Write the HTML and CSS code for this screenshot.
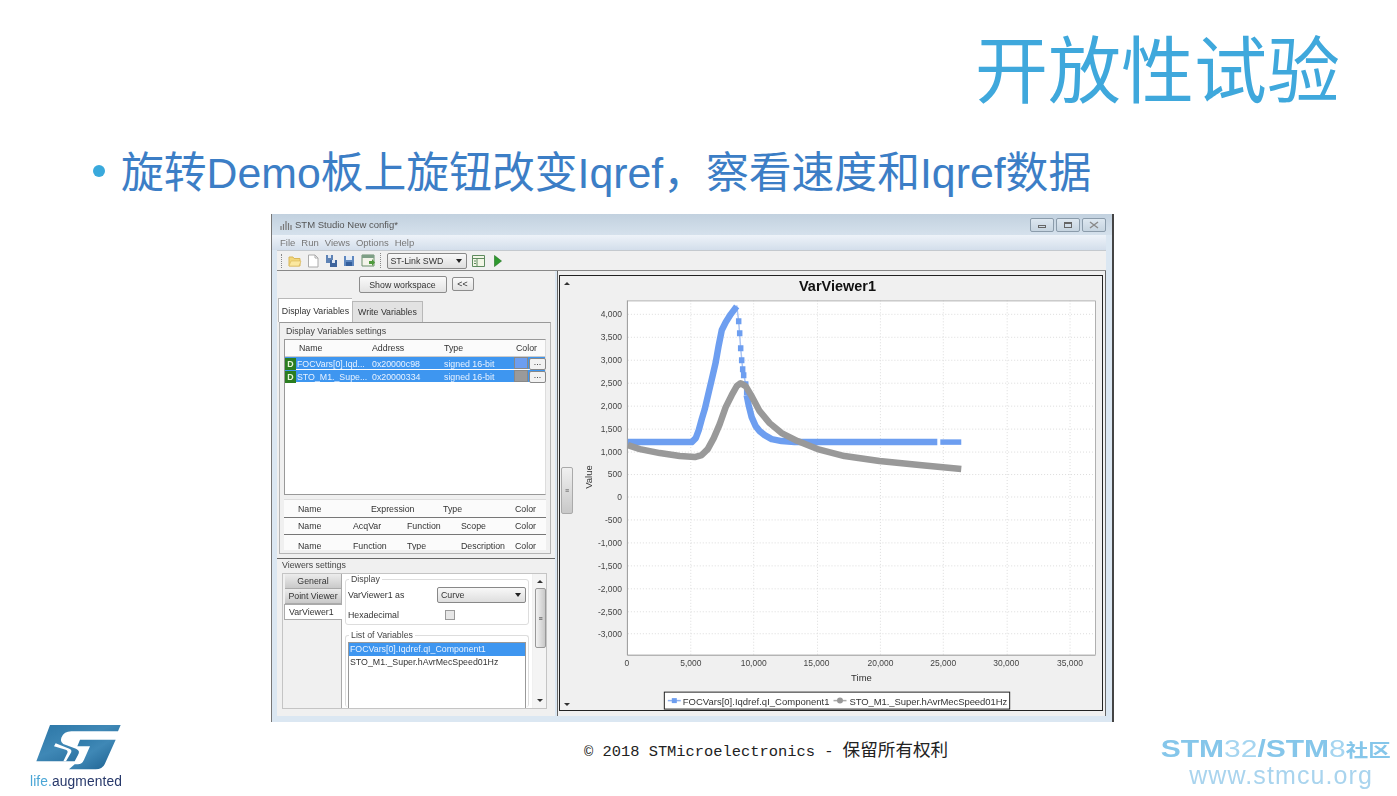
FILE: index.html
```html
<!DOCTYPE html>
<html lang="zh-CN">
<head>
<meta charset="utf-8"/>
<title>开放性试验</title>
<link rel="stylesheet" href="styles.css">
</head>
<body>
<div class="slide">
  <h1 class="slide-title">开放性试验</h1>
  <div class="bullet-line"><span class="bullet"></span><span>旋转Demo板上旋钮改变Iqref，察看速度和Iqref数据</span></div>

  <div class="window">
    <div class="titlebar">
      <svg class="app-icon" width="12" height="10" viewBox="0 0 12 10"><path d="M1 6v4M3.5 4v6M6 1v9M8.500 3v7M11 5v5" stroke="#777" stroke-width="1.2"/></svg>
      <span class="win-title">STM Studio New config*</span>
      <div class="win-btns">
        <span class="win-btn"><i class="ico-min"></i></span>
        <span class="win-btn"><i class="ico-max"></i></span>
        <span class="win-btn win-close">
          <svg width="10" height="8" viewBox="0 0 10 8"><path d="M1 1l8 6M9 1L1 7" stroke="#8a8a8a" stroke-width="1.4"/></svg>
        </span>
      </div>
    </div>
    <div class="menubar"><span>File</span><span>Run</span><span>Views</span><span>Options</span><span>Help</span></div>
    <div class="toolbar">
      <span class="grip"></span>
      <svg width="14" height="13" viewBox="0 0 14 13"><path d="M1 3h4l1 1.500h6V12H1z" fill="#f3d77a" stroke="#d9b75a"/><path d="M1 12l2-5h10l-2 5z" fill="#fbe8a0" stroke="#d9b75a" stroke-width=".6"/></svg>
      <svg width="12" height="14" viewBox="0 0 12 14"><path d="M1.500 1H8l3 3v9H1.500z" fill="#fff" stroke="#aaa"/><path d="M8 1v3h3" fill="none" stroke="#aaa"/></svg>
      <svg width="13" height="14" viewBox="0 0 13 14"><path d="M1 1h7v8H1z" fill="#5f83b5"/><path d="M3 1h3v3H3z" fill="#dde6f2"/><path d="M5 6h7v7H5z" fill="#3f659c"/><path d="M7 6h3v3H7z" fill="#dde6f2"/></svg>
      <svg width="12" height="12" viewBox="0 0 12 12"><path d="M1 1h10v10H1z" fill="#5f88c0"/><path d="M3 1h6v4H3z" fill="#e4ecf6"/><path d="M3 7h6v4H3z" fill="#345f9c"/></svg>
      <svg width="15" height="14" viewBox="0 0 15 14"><path d="M1 1h12v11H1z" fill="#f4f4ea" stroke="#6d8f6d"/><path d="M1 1h12v3H1z" fill="#7e9f86"/><path d="M8 7h3V5l3 3.500-3 3.500v-2H8z" fill="#4f9a3d"/></svg>
      <span class="divider"></span>
      <div class="combo combo-link"><span>ST-Link SWD</span><i class="caret"></i></div>
      <svg width="13" height="12" viewBox="0 0 13 12"><path d="M.5.500h12v11H.5z" fill="#f2f6e6" stroke="#5e8a5e"/><path d="M.5 3.500h12M5 3.500v8M2 6h2M2 8.500h2" stroke="#5e8a5e"/></svg>
      <svg class="play-icon" width="8" height="12" viewBox="0 0 8 12"><path d="M.5.500l7 5.500-7 5.500z" fill="#2f9a2f" stroke="#1d6f1d" stroke-width=".6"/></svg>
    </div>

    <div class="content">
      <div class="left-panel">
        <div class="ws-row">
          <button class="btn btn-ws">Show workspace</button>
          <button class="btn btn-back">&lt;&lt;</button>
        </div>
        <div class="tabs">
          <span class="tab tab-on">Display Variables</span>
          <span class="tab">Write Variables</span>
        </div>
        <div class="var-group">
          <div class="group-label">Display Variables settings</div>
          <div class="var-table">
            <div class="tr th cols-a"><span></span><span>Name</span><span>Address</span><span>Type</span><span>Color</span></div>
            <div class="tr row-sel cols-a">
              <span class="badge">D</span><span class="cell-t">FOCVars[0].Iqd...</span><span>0x20000c98</span><span>signed 16-bit</span>
              <span class="color-cell"><i class="swatch sw-blue"></i><i class="dots">...</i></span>
            </div>
            <div class="tr row-sel cols-a">
              <span class="badge">D</span><span class="cell-t">STO_M1._Supe...</span><span>0x20000334</span><span>signed 16-bit</span>
              <span class="color-cell"><i class="swatch sw-gray"></i><i class="dots">...</i></span>
            </div>
          </div>
          <div class="mini mini-a cols-a"><span></span><span>Name</span><span>Expression</span><span>Type</span><span>Color</span></div>
          <div class="mini mini-b cols-b"><span></span><span>Name</span><span>AcqVar</span><span>Function</span><span>Scope</span><span>Color</span></div>
          <div class="mini mini-c cols-b"><span></span><span>Name</span><span>Function</span><span>Type</span><span>Description</span><span>Color</span></div>
        </div>
        <div class="viewers">
          <div class="group-label viewers-label">Viewers settings</div>
          <div class="viewers-box">
            <div class="side-tabs">
              <span class="side-tab">General</span>
              <span class="side-tab">Point Viewer</span>
              <span class="side-tab side-on">VarViewer1</span>
            </div>
            <div class="viewer-form">
              <fieldset class="display-set">
                <legend>Display</legend>
                <div class="form-row"><span>VarViewer1 as</span><div class="combo combo-curve"><span>Curve</span><i class="caret"></i></div></div>
                <div class="form-row hex-row"><span>Hexadecimal</span><i class="check"></i></div>
              </fieldset>
              <fieldset class="list-set">
                <legend>List of Variables</legend>
                <div class="var-list">
                  <div class="list-sel">FOCVars[0].Iqdref.qI_Component1</div>
                  <div class="list-item">STO_M1._Super.hAvrMecSpeed01Hz</div>
                </div>
              </fieldset>
            </div>
            <div class="vscroll"><i class="arr-up"></i><span class="vthumb">≡</span><i class="arr-down"></i></div>
          </div>
        </div>
      </div>

      <div class="chart-panel">
        <div class="chart-box">
          <div class="chart-strip"><i class="arr-up"></i><span class="strip-handle">≡</span><i class="arr-down"></i></div>
          <svg class="chart" width="530" height="434" viewBox="573 276 530 434">
            <rect x="628" y="300" width="468" height="355" fill="#fff"/>
            <path class="grid" d="M691 300V655M754 300V655M818 300V655M881 300V655M944 300V655M1008 300V655M1071 300V655"/>
            <path class="grid" d="M628 314H1096M628 337H1096M628 360H1096M628 383H1096M628 406H1096M628 429H1096M628 452H1096M628 474.500H1096M628 497H1096M628 520H1096M628 543H1096M628 566H1096M628 589H1096M628 612H1096M628 634H1096"/>
            <path d="M628 300.500H1096.500V655" fill="none" stroke="#b0b0b0"/>
            <path d="M627.500 300V655.500H1096.500" fill="none" stroke="#999"/>
            <text class="chart-title" x="838" y="291" text-anchor="middle">VarViewer1</text>
            <g class="y-ticks" text-anchor="end">
              <text x="622" y="317">4,000</text><text x="622" y="340">3,500</text><text x="622" y="363">3,000</text>
              <text x="622" y="386">2,500</text><text x="622" y="409">2,000</text><text x="622" y="432">1,500</text>
              <text x="622" y="455">1,000</text><text x="622" y="477">500</text><text x="622" y="500">0</text>
              <text x="622" y="523">-500</text><text x="622" y="546">-1,000</text><text x="622" y="569">-1,500</text>
              <text x="622" y="592">-2,000</text><text x="622" y="615">-2,500</text><text x="622" y="637">-3,000</text>
            </g>
            <g class="y-ticks" text-anchor="middle">
              <text x="627" y="666">0</text><text x="691" y="666">5,000</text><text x="754" y="666">10,000</text>
              <text x="817" y="666">15,000</text><text x="881" y="666">20,000</text><text x="944" y="666">25,000</text>
              <text x="1007" y="666">30,000</text><text x="1071" y="666">35,000</text>
            </g>
            <text class="axis-name" x="862" y="681" text-anchor="middle">Time</text>
            <text class="axis-name" transform="translate(592 477) rotate(-90)" text-anchor="middle">Value</text>
            <polyline class="line-thin" points="737,305 739,321 741,348 743,369 746,384"/>
            <polyline class="line-blue" points="628,442 692,442 696,438 699,430 702,419 705,409 709,392 713,375 716,362 719,345 722,330 726,322 731,314 737,306"/>
            <path class="dots-blue" d="M739 318v6M740 330v6M741 345v6M742 357v6M743 366v6M744 372v6M746 381v6M747 389v6"/>
            <polyline class="line-blue" points="747,395 749,405 752,417 756,426 760,431 765,435 772,439 782,441 795,442 938,442"/>
            <path class="dots-blue" d="M941 442h21" stroke-width="6"/>
            <polyline class="line-gray" points="628,445 640,449 660,453 680,456 695,457 702,455 708,449 714,438 720,424 726,407 732,395 737,386 741,383 746,386 752,396 760,411 770,423 782,433 798,441 818,449 845,456 880,461 920,465 962,469"/>
            <rect class="legend-box" x="664.500" y="692.500" width="346" height="17"/>
            <path d="M668 701h13" stroke="#8fb0ee" stroke-width="1.500"/><rect x="672" y="698.500" width="5" height="5" fill="#6d9ef0"/>
            <text class="legend-text" x="683" y="705" textLength="147">FOCVars[0].Iqdref.qI_Component1</text>
            <path d="M834 701h13" stroke="#aaa" stroke-width="1.500"/><circle cx="840.500" cy="701" r="3" fill="#999"/>
            <text class="legend-text" x="850" y="705" textLength="158">STO_M1._Super.hAvrMecSpeed01Hz</text>
          </svg>
        </div>
      </div>
    </div>
  </div>

  <div class="footer">
    <div class="brand">
      <svg width="94" height="48" viewBox="94 22 282 144">
        <defs>
          <linearGradient id="stBlue" x1="0" y1="0" x2="1" y2="1">
            <stop offset="0" stop-color="#2b76a6"/>
            <stop offset=".45" stop-color="#3f88b6"/>
            <stop offset="1" stop-color="#1c5f8f"/>
          </linearGradient>
        </defs>
        <path fill="url(#stBlue)" d="M148 28H360L352 47H212Q190 47 182 66Q176 82 196 88L226 99Q240 105 232 118L222 137H107Z"/>
        <path fill="#fff" d="M165 83L206 99Q216 103 210 113L196 137H188L200 112Q203 105 195 102L160 92Z"/>
        <path fill="url(#stBlue)" d="M238 72H345L312 146Q305 161 285 161H205L222 146H232Q244 146 250 132L268 92H230Z"/>
      </svg>
      <div class="tagline"><span class="life">life.</span>augmented</div>
    </div>
    <div class="copyright">© 2018 STMicroelectronics - <span class="copyright-cn">保留所有权利</span></div>
    <div class="community">
      <div class="community-name"><b>STM</b>32<b>/STM</b>8<b class="cn">社区</b></div>
      <div class="community-url">www.stmcu.org</div>
    </div>
  </div>
</div>
</body>
</html>
```

FILE: styles.css
```css
html, body { margin: 0; padding: 0; background: #fff; }
body { font-family: "Liberation Sans", "Noto Sans CJK SC", sans-serif; overflow: hidden; }
i { font-style: normal; display: block; }

.slide { width: 1397px; height: 796px; display: flex; flex-direction: column; }

.slide-title {
  height: 140px;
  margin: 0;
  padding: 28px 57px 0 0;
  box-sizing: border-box;
  text-align: right;
  font-size: 73px;
  line-height: 88px;
  font-weight: 400;
  color: #3fa8dc;
}
.bullet-line {
  height: 74px;
  padding-left: 93px;
  display: flex;
  align-items: flex-start;
  font-size: 42.800px;
  line-height: 66px;
  color: #3c7ec6;
}
.bullet { width: 12px; height: 12px; margin: 25px 16px 0 0; border-radius: 50%; background: #39a9dc; flex: none; }

/* app window */
.window {
  width: 843px;
  height: 508px;
  margin-left: 271px;
  box-sizing: border-box;
  display: flex;
  flex-direction: column;
  background: #dbe7f2;
  border-left: 1px solid #777;
  border-right: 2px solid #444;
  font-size: 8.800px;
  color: #333;
  filter: blur(.35px);
}
.titlebar {
  height: 21px;
  flex: none;
  display: flex;
  align-items: center;
  padding-left: 8px;
  background: linear-gradient(#c2d1df, #d5e1ec);
  font-size: 9.500px;
  color: #555;
}
.app-icon { margin-right: 3px; }
.win-btns { margin-left: auto; margin-right: 6px; display: flex; gap: 2px; }
.win-btn {
  width: 24px;
  height: 14px;
  box-sizing: border-box;
  border: 1px solid #8b9cab;
  border-radius: 2px;
  background: linear-gradient(#dde7f0, #c6d4e0);
  display: flex;
  align-items: center;
  justify-content: center;
}
.ico-min { width: 8px; height: 3px; border: 1px solid #666; box-sizing: border-box; margin-top: 3px; }
.ico-max { width: 8px; height: 6px; border: 1px solid #666; box-sizing: border-box; border-top-width: 2px; }
.menubar {
  height: 15px;
  flex: none;
  display: flex;
  gap: 6px;
  align-items: center;
  padding-left: 8px;
  margin-right: 6px;
  background: linear-gradient(#eef3f9, #d3deeb);
  font-size: 9.500px;
  color: #777;
}
.toolbar {
  height: 21px;
  flex: none;
  box-sizing: border-box;
  margin-right: 6px;
  margin-left: 5px;
  display: flex;
  align-items: center;
  gap: 5.500px;
  background: #f0f0f0;
  border-top: 1px solid #c4c9ce;
  border-bottom: 1px solid #888;
}
.grip { width: 0; height: 14px; border-left: 1px dotted #888; margin: 0 0 0 4px; }
.divider { width: 0; height: 15px; border-left: 1px dotted #888; margin: 0 0 0 -1px; }
.combo {
  box-sizing: border-box;
  border: 1px solid #888;
  border-radius: 2px;
  background: linear-gradient(#f8f8f8, #dedede);
  display: flex;
  align-items: center;
  justify-content: space-between;
  padding: 0 4px 0 3px;
  color: #333;
}
.combo-link { width: 80px; height: 16px; }
.caret { width: 0; height: 0; border: 3px solid transparent; border-top: 4px solid #222; border-bottom: 0; }
.play-icon { margin-left: 3px; }

.content { flex: 1; display: flex; margin: 0 6px 6px 5px; min-height: 0; }

/* left side */
.left-panel { width: 278px; flex: none; box-sizing: border-box; background: #f0f0f0; display: flex; flex-direction: column; }
.ws-row { height: 22px; box-sizing: border-box; padding-top: 5px; flex: none; display: flex; justify-content: center; gap: 5px; align-items: flex-start; }
.btn {
  height: 17px;
  padding: 0;
  box-sizing: border-box;
  border: 1px solid #8c8c8c;
  border-radius: 2px;
  background: linear-gradient(#fafafa, #e2e2e2);
  font: inherit;
  color: #333;
}
.btn-ws { width: 88px; }
.btn-back { width: 22px; height: 14px; margin-top: 1px; }
.tabs { height: 24px; flex: none; margin-top: 5px; margin-left: 1px; display: flex; align-items: flex-end; }
.tab {
  box-sizing: border-box;
  width: 71px;
  height: 21px;
  border: 1px solid #b8b8b8;
  border-bottom: 0;
  display: flex;
  align-items: center;
  justify-content: center;
  background: #e2e2e2;
}
.tab-on { width: 74px; height: 24px; background: #fff; border-right: 0; }
.var-group {
  width: 272px;
  height: 232px;
  flex: none;
  margin-left: 2px;
  box-sizing: border-box;
  padding: 0 4px;
  border: 1px solid #b5b5b5;
  border-top-color: #999;
}
.group-label { height: 16px; line-height: 16px; padding-left: 2px; color: #444; }
.var-table { height: 156px; box-sizing: border-box; background: #fff; border: 1px solid #999; border-right-color: #ddd; }
.tr { display: grid; align-items: center; }
.cols-a { grid-template-columns: 11px 73px 72px 72px 1fr; }
.cols-b { grid-template-columns: 11px 55px 54px 54px 54px 1fr; }
.th { height: 16px; background: #fbfbfb; border-bottom: 1px solid #ccc; }
.th span, .mini span { padding-left: 3px; }
.row-sel { height: 12px; margin-bottom: 1px; background: #3e96f0; color: #e8f2ff; }
.row-sel span { padding-left: 3px; white-space: nowrap; overflow: hidden; }
.row-sel .cell-t { padding-left: 1px; }
.row-sel .badge { padding: 0; text-align: center; background: #2b7d20; color: #e6f5d8; font-weight: 700; line-height: 12px; }
.row-sel .color-cell { padding: 0 0 0 1px; display: flex; gap: 1px; overflow: visible; }
.swatch { width: 14px; height: 12px; box-sizing: border-box; border: 1px solid #888; }
.sw-blue { background: #6d9ef0; }
.sw-gray { background: #9a9a9a; }
.dots { width: 15px; height: 10px; margin-top: 1px; line-height: 6px; text-align: center; color: #333; border: 1px solid #888; background: #f2f2f2; border-radius: 2px; }
.mini { background: #fbfbfb; border-bottom: 1px solid #777; display: grid; align-items: center; overflow: hidden; }
.mini-a { height: 17px; margin-top: 4px; border-top: 1px solid #ddd; }
.mini-b { height: 16px; }
.mini-c { height: 15px; box-sizing: border-box; padding-top: 6px; border-bottom: 0; }

.viewers { flex: 1; margin-top: 4px; padding: 0 2px; border-top: 1px solid #666; min-height: 0; }
.viewers-label { height: 14px; line-height: 12px; padding: 0; margin-left: 3px; }
.viewers-box {
  width: 265px;
  height: 136px;
  margin-left: 3px;
  box-sizing: border-box;
  border: 1px solid #c4c4c4;
  display: flex;
  padding-left: 1px;
  overflow: hidden;
}
.side-tabs { width: 58px; flex: none; box-sizing: border-box; border-right: 1px solid #aaa; display: flex; flex-direction: column; }
.side-tab {
  height: 15px;
  margin-left: 1px;
  flex: none;
  display: flex;
  align-items: center;
  justify-content: center;
  background: linear-gradient(#ececec, #c9c9c9);
  border-bottom: 1px solid #aaa;
  box-sizing: border-box;
}
.side-on { height: 16px; margin: 0 -1px 0 0; background: #fff; justify-content: flex-start; padding-left: 4px; border: 1px solid #aaa; border-right: 0; }
.viewer-form { width: 190px; flex: none; padding-left: 3px; box-sizing: border-box; background: #fff; }
fieldset { margin: 0; padding: 0; border: 1px solid #ddd; border-radius: 3px; box-sizing: border-box; min-width: 0; }
legend { padding: 0 2px; margin-left: 3px; color: #444; line-height: 9px; }
.display-set { width: 184px; height: 50px; margin-top: 1px; padding-top: 3px; }
.form-row { display: flex; align-items: center; justify-content: space-between; padding-left: 2px; }
.combo-curve { width: 89px; height: 16px; margin-right: 2px; }
.hex-row { margin-top: 7px; justify-content: flex-start; gap: 46px; }
.check { width: 10px; height: 10px; box-sizing: border-box; border: 1px solid #999; background: #e6e6e6; }
.list-set { width: 184px; height: 76px; margin-top: 6px; border-bottom: 0; }
.var-list { width: 178px; height: 70px; margin: 2px 0 0 2px; box-sizing: border-box; border: 1px solid #999; border-bottom: 0; }
.list-sel { height: 13px; line-height: 13px; padding-left: 1px; background: #3e96f0; color: #e8f2ff; }
.list-item { height: 13px; line-height: 13px; padding-left: 1px; }
.vscroll { width: 14px; flex: none; margin-left: 1px; display: flex; flex-direction: column; align-items: center; justify-content: space-between; position: relative; background: #f4f4f4; padding: 6px 0; box-sizing: border-box; }
.vthumb { position: absolute; top: 14px; left: 2px; width: 11px; height: 60px; box-sizing: border-box; border: 1px solid #999; border-radius: 2px; background: linear-gradient(90deg, #f2f2f2, #c8c8c8); display: flex; align-items: center; justify-content: center; font-size: 7px; }
.arr-up { width: 0; height: 0; border: 3px solid transparent; border-bottom: 3px solid #333; border-top: 0; }
.arr-down { width: 0; height: 0; border: 3px solid transparent; border-top: 3px solid #333; border-bottom: 0; }

/* chart side */
.chart-panel {
  flex: 1;
  margin-left: 2px;
  box-sizing: border-box;
  padding: 4px 2px 5px 1px;
  border-left: 1px solid #666;
  border-right: 1px solid #666;
  background: #f0f0f0;
  min-width: 0;
}
.chart-box { height: 100%; box-sizing: border-box; display: flex; border: 1px solid #222; background: #f0f0f0; }
.chart-strip { width: 13px; flex: none; position: relative; display: flex; flex-direction: column; align-items: center; justify-content: space-between; padding: 6px 0 4px; box-sizing: border-box; }
.strip-handle { position: absolute; top: 191px; left: 1px; width: 12px; height: 47px; box-sizing: border-box; border: 1px solid #aaa; border-radius: 2px; background: linear-gradient(#f0f0f0, #c8c8c8); display: flex; align-items: center; justify-content: center; font-size: 7px; color: #555; }
.chart { display: block; font-family: "Liberation Sans", sans-serif; }
.grid { fill: none; stroke: #dcdcdc; stroke-dasharray: 1 2; }
.chart-title { font-size: 14.500px; font-weight: 700; fill: #111; }
.y-ticks { font-size: 8.500px; fill: #444; }
.axis-name { font-size: 9.500px; fill: #333; }
.line-thin { fill: none; stroke: #a9c3f3; stroke-width: 1.500; }
.line-blue { fill: none; stroke: #6d9ef0; stroke-width: 6.500; stroke-linejoin: round; }
.dots-blue { fill: none; stroke: #6d9ef0; stroke-width: 5.500; }
.line-gray { fill: none; stroke: #999; stroke-width: 6.500; stroke-linejoin: round; }
.legend-box { fill: #fff; stroke: #222; }
.legend-text { font-size: 9.500px; fill: #333; }

/* footer */
.footer { flex: 1; display: flex; position: relative; }
.brand { width: 94px; margin: 1px 0 0 32px; flex: none; filter: blur(.3px); }
.brand svg { display: block; }
.tagline { font-size: 13.800px; line-height: 14px; margin: 4px 0 0 -2px; letter-spacing: .1px; color: #27386a; white-space: nowrap; }
.life { color: #4aa6d6; }
.copyright {
  margin: 18px 0 0 458px;
  font-family: "Liberation Mono", monospace;
  font-size: 15.400px;
  line-height: 18px;
  color: #222;
  white-space: nowrap;
}
.copyright-cn { font-family: "Noto Sans CJK SC", sans-serif; font-size: 17.600px; }
.community { margin-left: auto; margin-right: 6px; margin-top: 15px; text-align: right; filter: blur(.3px); }
.community-name { font-size: 24px; line-height: 24px; color: #a5d5f0; white-space: nowrap; transform: scaleX(1.25); transform-origin: right center; }
.community-name b { font-weight: 700; color: #85c6ea; }
.community-name .cn { font-size: 18px; }
.community-url { font-size: 25px; line-height: 24px; letter-spacing: 1.100px; color: #a9d4ee; margin-right: 18px; }
```
